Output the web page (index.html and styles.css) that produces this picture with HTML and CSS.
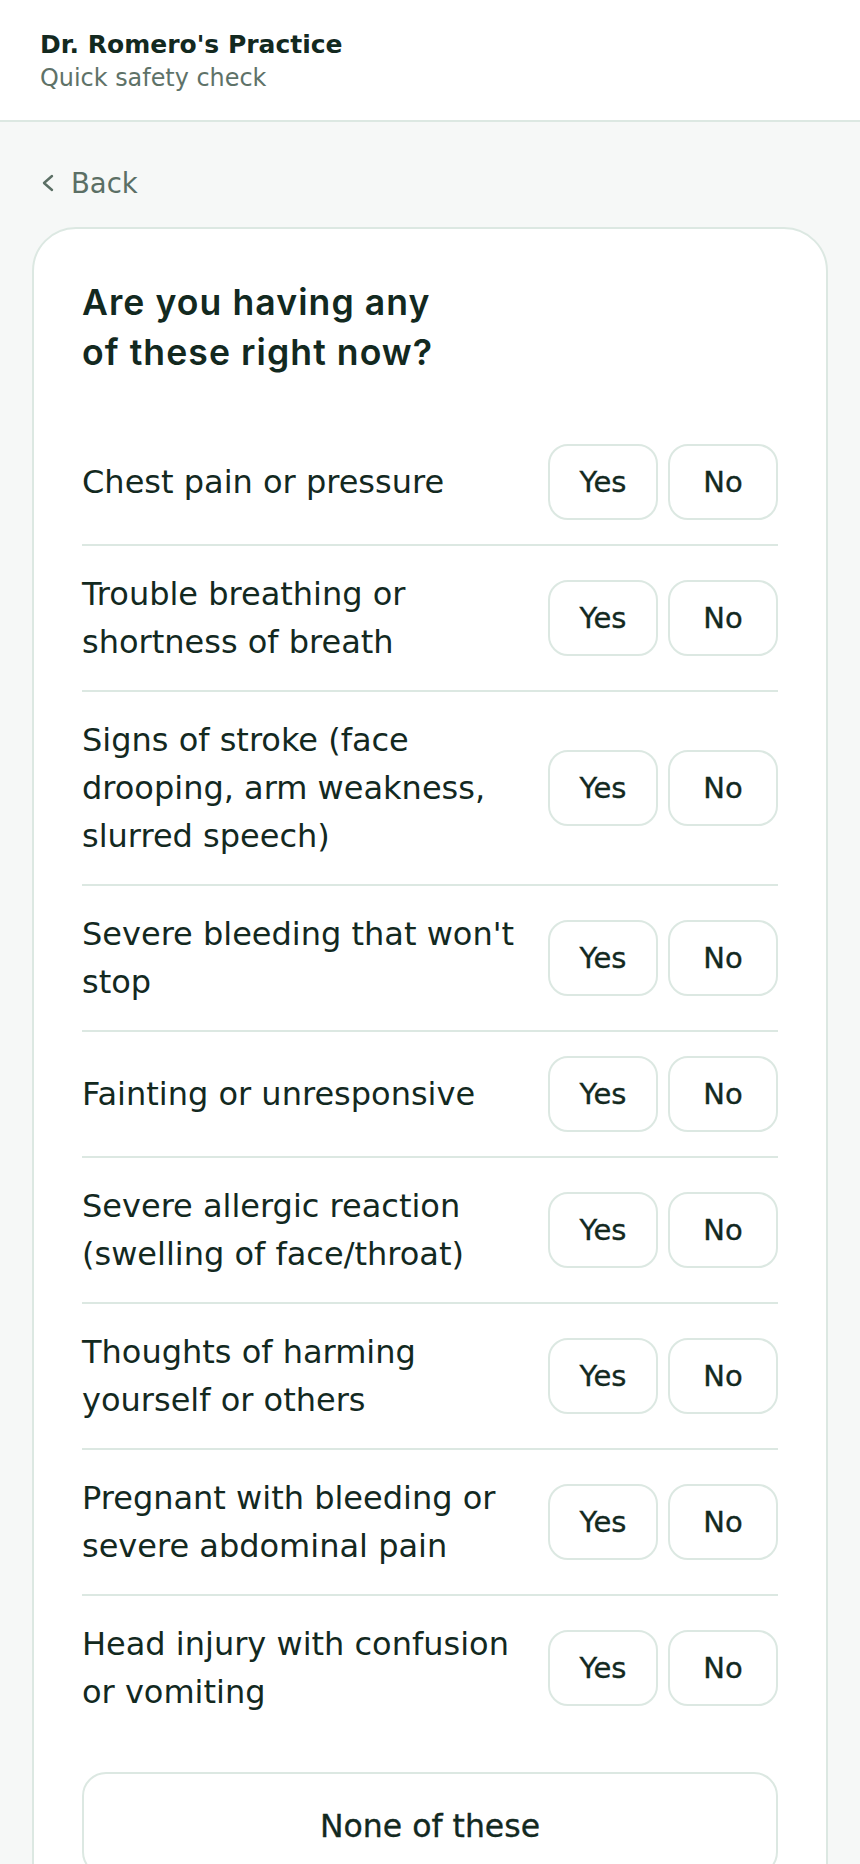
FILE: index.html
```html
<!DOCTYPE html>
<html lang="en">
<head>
<meta charset="utf-8">
<title>Quick safety check</title>
<link rel="stylesheet" href="styles.css">
</head>
<body>
<header class="topbar">
  <div class="practice">Dr. Romero's Practice</div>
  <div class="subtitle">Quick safety check</div>
</header>
<main class="page">
  <a class="back" href="#">
    <svg class="back-icon" width="14" height="18" viewBox="0 0 14 18" aria-hidden="true">
      <polyline points="11,2 3,9 11,16" fill="none" stroke="currentColor" stroke-width="2.4" stroke-linecap="round" stroke-linejoin="round"/>
    </svg>
    <span>Back</span>
  </a>
  <section class="card">
    <h1 class="question">Are you having any of these right now?</h1>
    <div class="list">
      <div class="row"><div class="label">Chest pain or pressure</div><div class="choices"><button class="choice">Yes</button><button class="choice">No</button></div></div>
      <div class="row"><div class="label">Trouble breathing or shortness of breath</div><div class="choices"><button class="choice">Yes</button><button class="choice">No</button></div></div>
      <div class="row"><div class="label">Signs of stroke (face drooping, arm weakness, slurred speech)</div><div class="choices"><button class="choice">Yes</button><button class="choice">No</button></div></div>
      <div class="row"><div class="label">Severe bleeding that won't stop</div><div class="choices"><button class="choice">Yes</button><button class="choice">No</button></div></div>
      <div class="row"><div class="label">Fainting or unresponsive</div><div class="choices"><button class="choice">Yes</button><button class="choice">No</button></div></div>
      <div class="row"><div class="label">Severe allergic reaction (swelling of face/throat)</div><div class="choices"><button class="choice">Yes</button><button class="choice">No</button></div></div>
      <div class="row"><div class="label">Thoughts of harming yourself or others</div><div class="choices"><button class="choice">Yes</button><button class="choice">No</button></div></div>
      <div class="row"><div class="label">Pregnant with bleeding or severe abdominal pain</div><div class="choices"><button class="choice">Yes</button><button class="choice">No</button></div></div>
      <div class="row"><div class="label">Head injury with confusion or vomiting</div><div class="choices"><button class="choice">Yes</button><button class="choice">No</button></div></div>
    </div>
    <button class="none-btn">None of these</button>
  </section>
</main>
</body>
</html>
```

FILE: styles.css
```css
* { box-sizing: border-box; }

html, body {
  margin: 0;
  padding: 0;
}

body {
  background: #f6f8f7;
  color: #13291f;
  font-family: "DejaVu Sans", "Noto Sans", sans-serif;
}

.topbar {
  background: #ffffff;
  border-bottom: 2px solid #dce8e2;
  padding: 29px 40px 25px;
}

.practice {
  font-size: 25px;
  line-height: 32px;
  font-weight: 700;
  color: #13291f;
}

.subtitle {
  font-size: 23.9px;
  line-height: 34px;
  color: #5e7268;
}

.page {
  padding: 35px 32px 0;
}

.back {
  display: inline-flex;
  align-items: center;
  gap: 16px;
  padding: 8px;
  margin-bottom: 18px;
  color: #5b6f65;
  text-decoration: none;
  font-size: 27.5px;
  line-height: 36px;
}

.back-icon {
  display: block;
  margin-left: 1px;
}

.card {
  background: #ffffff;
  border: 2px solid #dce8e2;
  border-radius: 44px;
  padding: 49px 48px 48px;
}

.question {
  font-family: "Inter", "DejaVu Sans", sans-serif;
  font-weight: 600;
  font-size: 35.6px;
  line-height: 50px;
  letter-spacing: 0.03em;
  max-width: 365px;
  margin: 0 0 42px;
  color: #13291f;
}

.row {
  display: flex;
  align-items: center;
  gap: 24px;
  padding: 24px 0;
  border-bottom: 2px solid #dce8e2;
}

.row:last-child {
  border-bottom: none;
}

.label {
  flex: 1;
  font-size: 32px;
  line-height: 48px;
}

.choices {
  display: flex;
  gap: 10px;
  flex-shrink: 0;
}

.choice {
  width: 110px;
  height: 76px;
  background: #ffffff;
  border: 2px solid #dce8e2;
  border-radius: 20px;
  font-family: "DejaVu Sans", sans-serif;
  font-size: 29px;
  font-weight: 500;
  -webkit-text-stroke: 0.35px currentColor;
  color: #13291f;
  padding: 0;
}

.none-btn {
  display: block;
  width: 100%;
  margin-top: 32px;
  padding: 32px 0 28px;
  background: #ffffff;
  border: 2px solid #dce8e2;
  border-radius: 24px;
  font-family: "DejaVu Sans", sans-serif;
  font-size: 31.5px;
  line-height: 40px;
  font-weight: 500;
  -webkit-text-stroke: 0.35px currentColor;
  color: #13291f;
}
```
